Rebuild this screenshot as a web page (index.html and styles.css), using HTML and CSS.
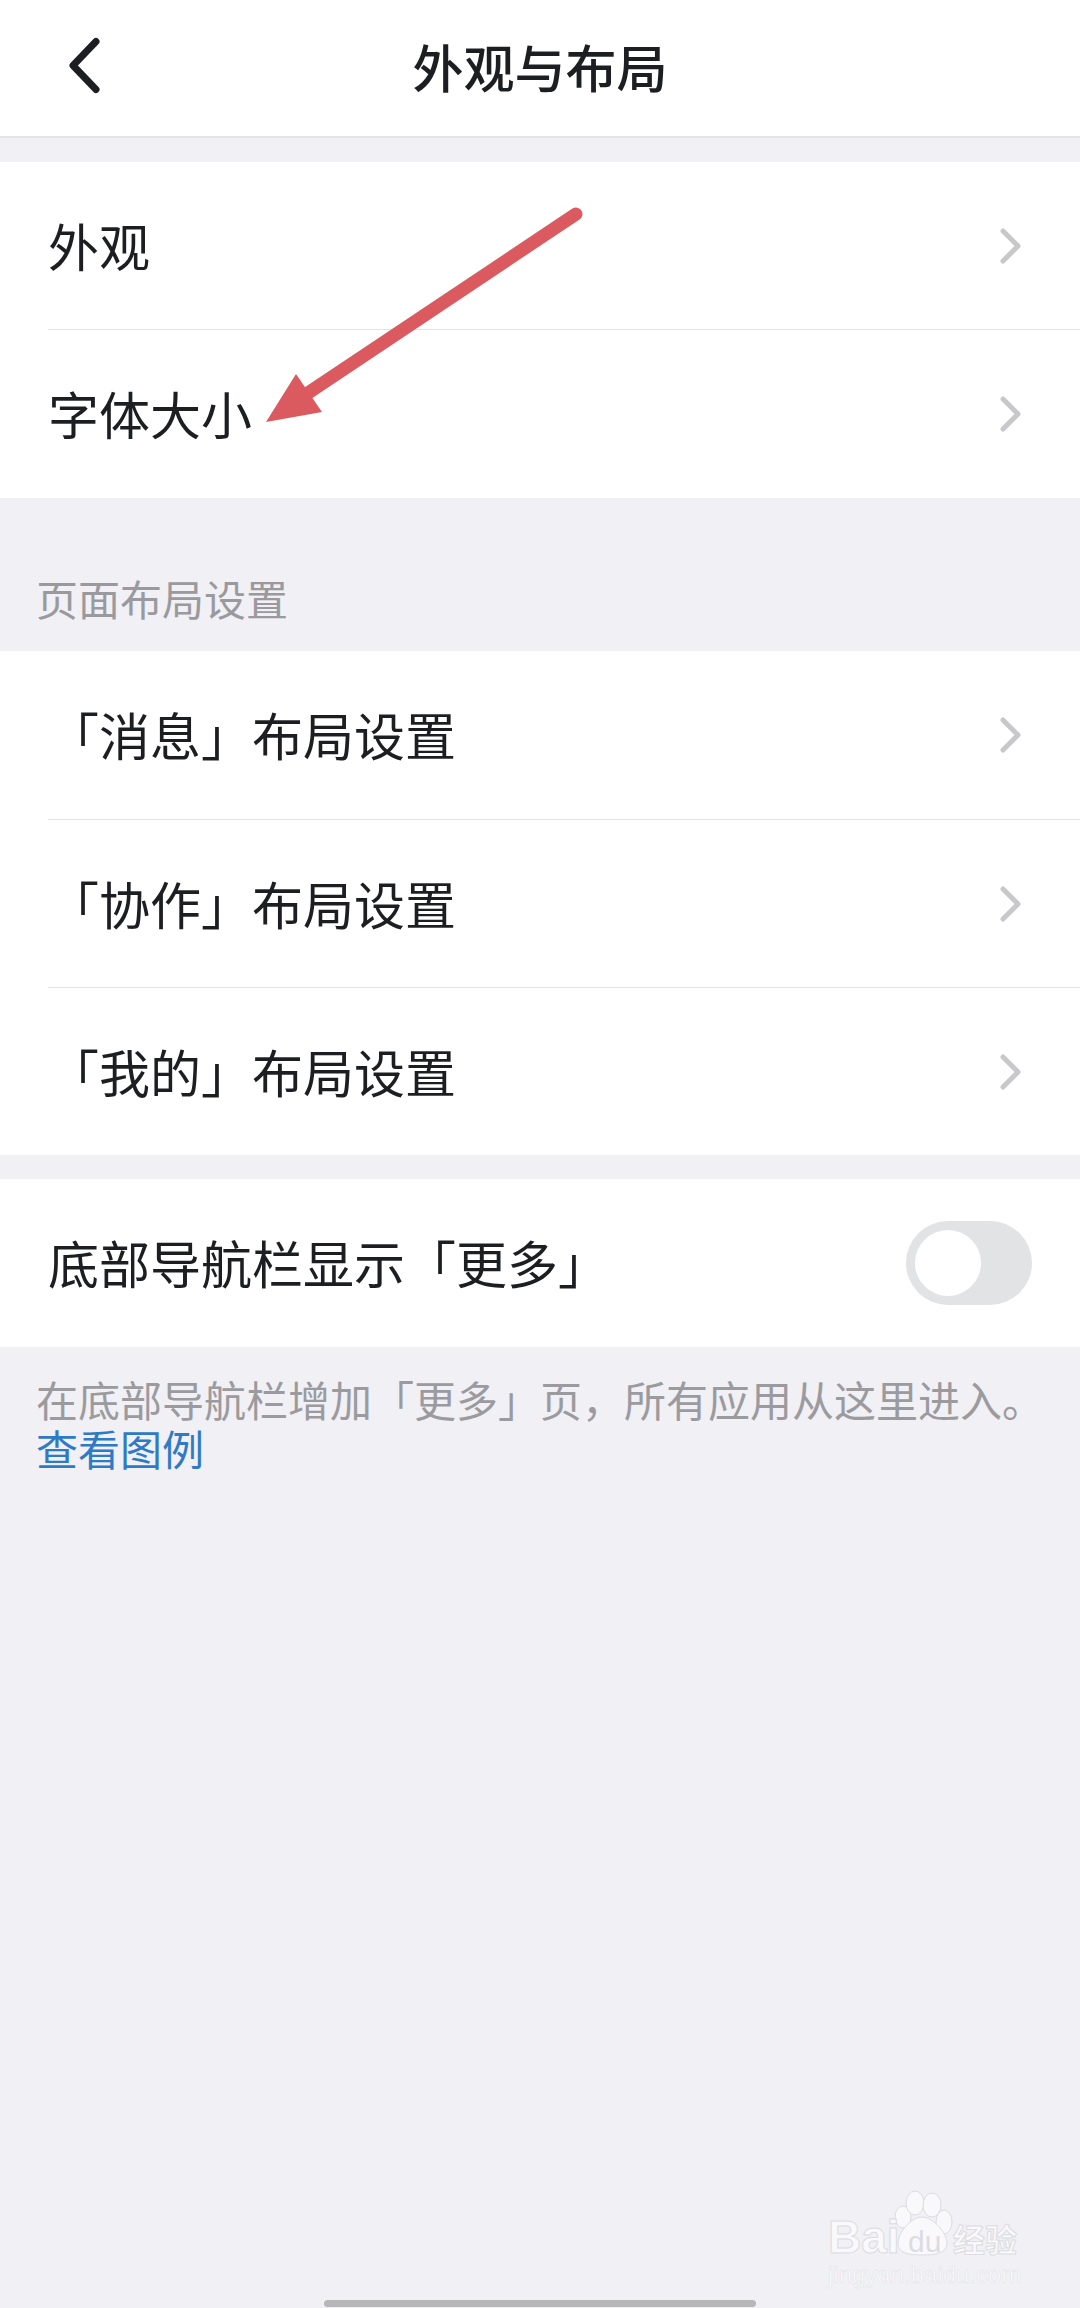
FILE: index.html
```html
<!doctype html>
<html lang="zh">
<head>
<meta charset="utf-8">
<title>外观与布局</title>
<link rel="stylesheet" href="styles.css">
</head>
<body>

<div class="page">
    <div class="header">
        <svg class="back" width="34" height="60" viewBox="0 0 34 60"><path d="M29 5.5 L6 29.5 L29 53.5"/></svg>
        <span class="title">外观与布局</span>
    </div>

    <div class="group first">
        <div class="row"><span>外观</span><svg class="chev" width="26" height="42" viewBox="0 0 26 42"><path d="M3 6 L18 21 L3 36"/></svg></div>
        <div class="row"><span>字体大小</span><svg class="chev" width="26" height="42" viewBox="0 0 26 42"><path d="M3 6 L18 21 L3 36"/></svg></div>
    </div>

    <div class="section">页面布局设置</div>

    <div class="group">
        <div class="row"><span>「消息」布局设置</span><svg class="chev" width="26" height="42" viewBox="0 0 26 42"><path d="M3 6 L18 21 L3 36"/></svg></div>
        <div class="row"><span>「协作」布局设置</span><svg class="chev" width="26" height="42" viewBox="0 0 26 42"><path d="M3 6 L18 21 L3 36"/></svg></div>
        <div class="row"><span>「我的」布局设置</span><svg class="chev" width="26" height="42" viewBox="0 0 26 42"><path d="M3 6 L18 21 L3 36"/></svg></div>
    </div>

    <div class="group third">
        <div class="row"><span>底部导航栏显示「更多」</span><div class="toggle"><div class="knob"></div></div></div>
    </div>

    <div class="note">在底部导航栏增加「更多」页，所有应用从这里进入。<a class="link">查看图例</a></div>
</div>

<!-- red annotation arrow -->
<svg class="arrow" width="1080" height="500" viewBox="0 0 1080 500">
    <path class="shaft" d="M576 214 L308 393"/>
    <path class="head" d="M266 422 L296 374 L322 412 Z"/>
</svg>

<div class="mark">
    <svg class="paw" width="70" height="70" viewBox="0 0 70 70">
        <ellipse cx="13" cy="27" rx="8" ry="11"/>
        <ellipse cx="25" cy="13" rx="9" ry="12"/>
        <ellipse cx="42" cy="15" rx="9" ry="12"/>
        <ellipse cx="54" cy="32" rx="8" ry="12"/>
        <path d="M32 27 C43 27 57 43 57 53 C57 63 46 65 32 65 C18 65 8 63 8 53 C8 43 21 27 32 27 Z"/>
    </svg>
    <span class="mark-bai">Bai</span>
    <span class="mark-du">du</span>
    <span class="mark-jy">经验</span>
    <span class="mark-url">jingyan.baidu.com</span>
</div>

<div class="homebar"></div>

</body>
</html>
```

FILE: styles.css
```css
html,body{
    margin: 0;
    height: 100%;
}
body{
    position: relative;
    width: 1080px;
    height: 2308px;
    overflow: hidden;
    background-color: #f0f0f5;
    font-family: "Noto Sans CJK SC","Noto Sans",sans-serif;
    color: #1c1e21;
}
.header{
    position: relative;
    height: 136px;
    background-color: #fff;
    border-bottom: 2px solid #e3e3e8;
    display: flex;
    align-items: center;
    justify-content: center;
}
.title{
    font-size: 51px;
    font-weight: 500;
    line-height: 64px;
    margin-bottom: 5px;
}
.back{
    position: absolute;
    left: 67px;
    top: 36px;
}
.back path{
    fill: none;
    stroke: #1c1e21;
    stroke-width: 7;
    stroke-linecap: round;
    stroke-linejoin: round;
}
.group{
    background-color: #fff;
}
.first{
    margin-top: 24px;
}
.third{
    margin-top: 24px;
}
.row{
    height: 168px;
    margin-left: 48px;
    padding-right: 48px;
    display: flex;
    align-items: center;
    justify-content: space-between;
    font-size: 51px;
    border-top: 1px solid #e4e4e6;
    box-sizing: border-box;
}
.row:first-child{
    border-top: none;
}
.first .row:first-child{
    height: 167px;
}
.first .row:last-child{
    height: 169px;
}
.row span{
    line-height: 64px;
    margin-bottom: 2px;
}
.chev{
    margin-right: 6px;
}
.chev path{
    fill: none;
    stroke: #c8c8ca;
    stroke-width: 5;
    stroke-linecap: round;
    stroke-linejoin: round;
}
.section{
    height: 153px;
    box-sizing: border-box;
    padding: 74px 0 0 36px;
    font-size: 42px;
    line-height: 52px;
    color: #9a9a9e;
}
.toggle{
    width: 126px;
    height: 84px;
    border-radius: 42px;
    background-color: #e2e3e5;
    box-sizing: border-box;
    padding: 9px;
}
.knob{
    width: 66px;
    height: 66px;
    border-radius: 50%;
    background-color: #fff;
}
.note{
    padding: 27px 20px 0 36px;
    font-size: 42px;
    line-height: 49px;
    color: #9b9b9f;
}
.link{
    display: block;
    color: #2f7ac4;
}
.arrow{
    position: absolute;
    left: 0;
    top: 0;
}
.shaft{
    stroke: #da5a60;
    stroke-width: 13;
    stroke-linecap: round;
    fill: none;
}
.head{
    fill: #da5a60;
}
.mark{
    position: absolute;
    left: 820px;
    top: 2190px;
    width: 220px;
    height: 100px;
    color: #f9f9fb;
    -webkit-text-stroke: 1px #dcdce0;
}
.mark span{
    position: absolute;
    white-space: nowrap;
}
.paw{
    position: absolute;
    left: 70px;
    top: 0;
    fill: #f9f9fb;
    stroke: #dcdce0;
    stroke-width: 1;
}
.mark-bai{
    left: 8px;
    top: 19px;
    font: bold 46px/56px "Liberation Sans",sans-serif;
}
.mark-du{
    left: 88px;
    top: 32px;
    font: 30px/40px "Liberation Sans",sans-serif;
    color: #dcdce0;
    -webkit-text-stroke: 0;
}
.mark-jy{
    left: 133px;
    top: 26px;
    font-size: 32px;
    line-height: 44px;
    font-weight: 700;
}
.mark-url{
    left: 8px;
    top: 70px;
    font: 24px/30px "Liberation Sans",sans-serif;
    -webkit-text-stroke: .5px #e2e2e6;
}
.homebar{
    position: absolute;
    left: 324px;
    bottom: 1px;
    width: 432px;
    height: 7px;
    border-radius: 4px;
    background-color: #b7b7b9;
}
```
